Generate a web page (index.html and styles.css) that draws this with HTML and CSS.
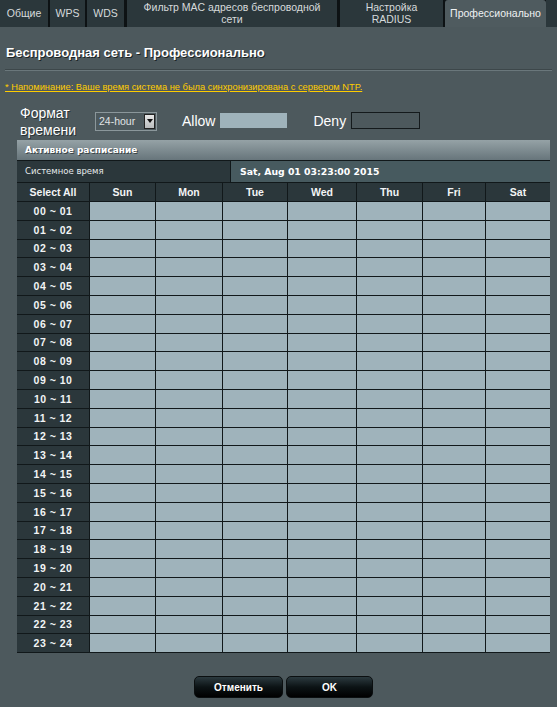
FILE: index.html
```html
<!DOCTYPE html>
<html lang="ru">
<head>
<meta charset="utf-8">
<title>Беспроводная сеть - Профессионально</title>
<link rel="stylesheet" href="styles.css">
</head>
<body>
<nav class="tabs">
  <div class="tab t1">Общие</div>
  <div class="tab t2">WPS</div>
  <div class="tab t3">WDS</div>
  <div class="tab t4">Фильтр MAC адресов беспроводной<br>сети</div>
  <div class="tab t5">Настройка<br>RADIUS</div>
  <div class="tab t6 active">Профессионально</div>
  <div class="tab-fill"></div>
</nav>

<h1 class="title">Беспроводная сеть - Профессионально</h1>
<div class="rule"></div>

<a class="notice" href="#">* Напоминание: Ваше время система не была синхронизирована с сервером NTP.</a>

<div class="form-row">
  <div class="fmt-label">Формат<br>времени</div>
  <div class="select"><span class="select-text">24-hour</span><span class="select-btn"><span class="tri"></span></span></div>
  <span class="lg-label allow-label">Allow</span>
  <span class="box allow-box"></span>
  <span class="lg-label deny-label">Deny</span>
  <span class="box deny-box"></span>
</div>

<section class="sched">
  <div class="sched-title">Активное расписание</div>
  <div class="systime">
    <div class="systime-th">Системное время</div>
    <div class="systime-td">Sat, Aug 01 03:23:00 2015</div>
  </div>
  <div class="grid" id="grid">
    <div class="hd">Select All</div>
    <div class="hd">Sun</div>
    <div class="hd">Mon</div>
    <div class="hd">Tue</div>
    <div class="hd">Wed</div>
    <div class="hd">Thu</div>
    <div class="hd">Fri</div>
    <div class="hd">Sat</div>
  </div>
</section>

<div class="buttons">
  <button class="btn btn-cancel">Отменить</button>
  <button class="btn btn-ok">OK</button>
</div>

<script>
  var g = document.getElementById('grid');
  function p(n){return (n<10?'0':'')+n;}
  for (var h = 0; h < 24; h++) {
    var th = document.createElement('div');
    th.className = 'hr';
    th.textContent = p(h) + ' ~ ' + p(h+1);
    g.appendChild(th);
    for (var d = 0; d < 7; d++) {
      var c = document.createElement('div');
      c.className = 'cell';
      g.appendChild(c);
    }
  }
</script>
</body>
</html>
```

FILE: styles.css
```css
html, body {
  margin: 0;
  padding: 0;
}
body {
  background: #4d595d;
  width: 557px;
  height: 707px;
  overflow: hidden;
  font-family: "Liberation Sans", Arial, sans-serif;
  color: #fff;
}

/* Tabs */
.tabs {
  display: flex;
  height: 27px;
  background: #0d1214;
}
.tab {
  background: #2b373b;
  color: #d6dadb;
  font-size: 10.5px;
  line-height: 11.5px;
  text-align: center;
  display: flex;
  align-items: center;
  justify-content: center;
  margin-right: 2px;
}
.t1 { width: 48px; }
.t2 { width: 35px; }
.t3 { width: 37px; margin-right: 3px; }
.t4 { width: 210px; margin-right: 3px; }
.t5 { width: 103px; }
.t6 { width: 101px; margin-right: 0; }
.tab.active {
  background: #4f5b5f;
  color: #eef1f2;
  border-radius: 3px 3px 0 0;
}
.tab-fill {
  flex: 1;
  background: #2b373b;
}

/* Title */
.title {
  margin: 18px 0 0 6px;
  font-size: 13px;
  line-height: 16px;
  font-weight: bold;
  color: #fff;
  text-shadow: 1px 1px 0 #1c2426;
}
.rule {
  margin: 8px 5px 0 5px;
  height: 1px;
  background: #6a777b;
  border-top: 1px solid #3d474a;
}

.notice {
  display: block;
  margin: 11px 0 0 5px;
  font-size: 9.3px;
  line-height: 11px;
  color: #ffcc00;
  text-decoration: underline;
}

/* form row */
.form-row {
  display: flex;
  align-items: center;
  height: 34px;
  margin-top: 12px;
  padding-left: 20px;
}
.fmt-label {
  width: 75px;
  font-size: 14px;
  line-height: 17px;
  color: #fff;
  text-shadow: 1px 1px 0 #2a3336;
}
.select {
  width: 60px;
  height: 17px;
  border: 1px solid #8b979b;
  background: #4d595d;
  display: flex;
  align-items: center;
  margin-bottom: 2px;
}
.select-text {
  flex: 1;
  font-size: 10.5px;
  color: #e0e4e5;
  padding-left: 3px;
}
.select-btn {
  width: 11px;
  height: 15px;
  margin-right: 1px;
  background: linear-gradient(#e6e6e6, #b9bcbd);
  border: 1px solid #222;
  box-sizing: border-box;
  display: flex;
  align-items: center;
  justify-content: center;
}
.tri {
  width: 0;
  height: 0;
  border-left: 3px solid transparent;
  border-right: 3px solid transparent;
  border-top: 4px solid #111;
}
.lg-label {
  font-size: 14px;
  color: #fff;
  margin-bottom: 3px;
}
.allow-label { margin-left: 25px; }
.deny-label { margin-left: 26px; }
.box {
  display: block;
  margin-bottom: 3px;
}
.allow-box {
  margin-left: 5px;
  width: 67px;
  height: 15px;
  background: #9fb3bb;
}
.deny-box {
  margin-left: 5px;
  width: 67px;
  height: 15px;
  border: 1px solid #141a1c;
}

/* schedule */
.sched {
  margin: 1px 0 0 17px;
  width: 533px;
  background: #11181a;
  padding-bottom: 1px;
}
.sched-title {
  height: 20px;
  margin-bottom: 1px;
  background: linear-gradient(#95a2a6, #67757b);
  font-family: "DejaVu Sans", Verdana, sans-serif;
  font-size: 9px;
  font-weight: bold;
  line-height: 20px;
  padding-left: 8px;
  color: #fff;
  text-shadow: 1px 1px 0 #3b4548;
}
.systime {
  display: grid;
  grid-template-columns: 213px 1fr;
  column-gap: 1px;
  height: 21px;
  margin-bottom: 1px;
}
.systime-th {
  background: #2b373b;
  font-family: "DejaVu Sans", Verdana, sans-serif;
  font-size: 8.5px;
  line-height: 21px;
  padding-left: 8px;
  color: #e6eaeb;
}
.systime-td {
  background: #475a5f;
  font-family: "DejaVu Sans", Verdana, sans-serif;
  font-size: 9.3px;
  font-weight: bold;
  line-height: 21px;
  padding-left: 9px;
  color: #fff;
}
.grid {
  display: grid;
  grid-template-columns: 72px 65px 66px 64px 68px 65px 62px 64px;
  grid-template-rows: 18px repeat(24, 17.8px);
  gap: 1px;
}
.hd, .hr {
  background: #2b373b;
  color: #f2f4f5;
  font-size: 10.5px;
  font-weight: bold;
  display: flex;
  align-items: center;
  justify-content: center;
}
.hr {
  letter-spacing: 0.5px;
}
.cell {
  background: #9fb3bb;
}

/* buttons */
.buttons {
  width: 533px;
  margin: 23px 0 0 17px;
  display: flex;
  justify-content: center;
  gap: 3px;
}
.btn {
  height: 22px;
  border: 1px solid #0b0f10;
  border-radius: 5px;
  background: linear-gradient(#2c3a3f 0%, #0c1315 50%, #000 100%);
  color: #fff;
  font-family: "Liberation Sans", Arial, sans-serif;
  font-size: 10px;
  font-weight: bold;
  padding: 0;
}
.btn-cancel { width: 89px; }
.btn-ok { width: 87px; }
```
